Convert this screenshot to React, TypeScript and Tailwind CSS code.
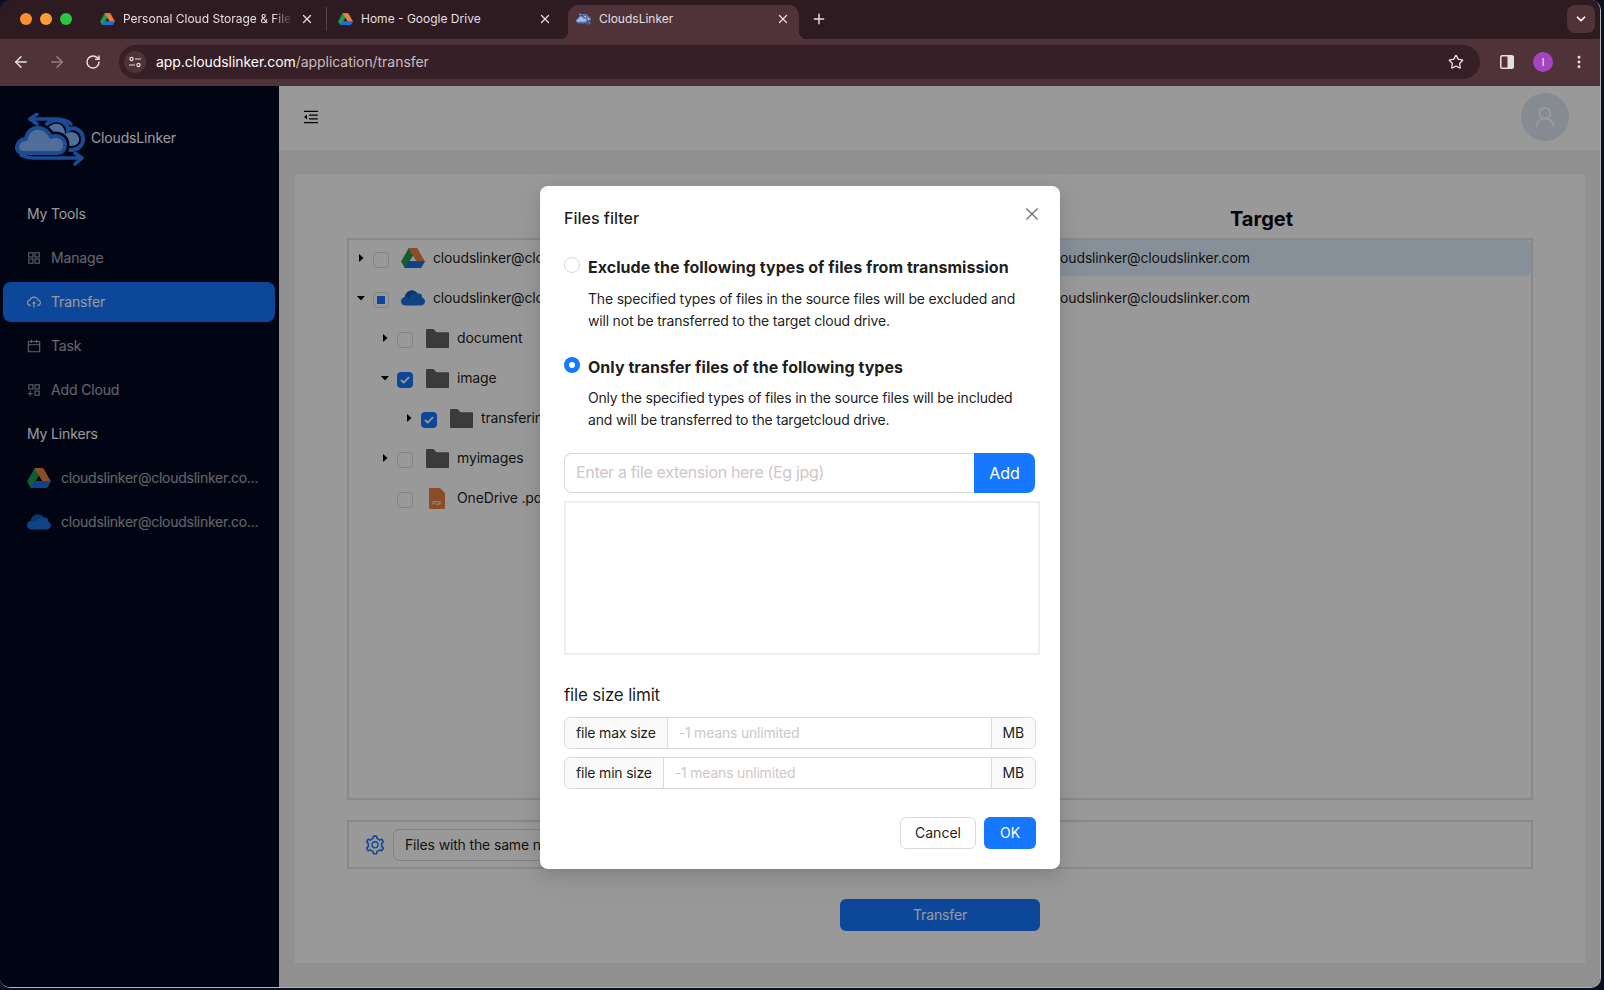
import {
  ArrowLeft,
  ArrowRight,
  ChevronDown,
  EllipsisVertical,
  Plus,
  RotateCw,
  Star,
  X,
} from "lucide-react";
import {
  AiOutlineAppstore,
  AiOutlineAppstoreAdd,
  AiOutlineCalendar,
  AiOutlineClose,
  AiOutlineCloudUpload,
  AiOutlineMenuFold,
  AiOutlineSetting,
  AiOutlineUser,
} from "react-icons/ai";

function Drive({ size = 24 }: { size?: number }) {
  return (
    <svg width={size} height={(size * 20) / 24} viewBox="0 0 24 20" className="shrink-0">
      <g strokeLinejoin="round" strokeWidth="1">
        <path d="M8 .5 L.6 13.5 L4 19.5 L12 6.8 Z" fill="#1f9d4d" stroke="#1f9d4d" />
        <path d="M8 .5 H16 L23.4 13.5 H16 Z" fill="#e8813f" stroke="#e8813f" />
        <path d="M4 19.5 H20 L23.4 13.5 H8 Z" fill="#1c6fe0" stroke="#1c6fe0" />
      </g>
    </svg>
  );
}

function OneDrive({ size = 24 }: { size?: number }) {
  return (
    <svg width={size} height={(size * 16) / 24} viewBox="0 0 24 16" className="shrink-0">
      <path
        d="M5 15.5 C1.5 15.5 0 13.2 0 11.2 C0 9 1.6 7.3 3.8 7 C4.4 3 7.6 .5 11 .5 C13.6 .5 15.6 1.8 16.8 3.8 C17.4 3.6 18 3.5 18.6 3.6 C20.4 3.9 21.4 5.6 21 7.6 C22.8 8.2 24 9.6 24 11.6 C24 13.8 22.2 15.5 20 15.5 Z"
        fill="#1c6fe0"
      />
      <path d="M3.8 7 C4.4 3 7.6 .5 11 .5 C13.6 .5 15.6 1.8 16.8 3.8 C13 3.4 9 5 8 8 C6.6 7 5 6.8 3.8 7 Z" fill="#1558c4" />
    </svg>
  );
}

function Logo({
  width,
  height,
  stroke,
  fill,
  halo,
}: {
  width: number;
  height: number;
  stroke: string;
  fill: string;
  halo: string;
}) {
  return (
    <svg width={width} height={height} viewBox="0 0 70 53" fill="none" className="shrink-0">
      {/* back cloud */}
      <path d="M33 16 C35 11 43 9 47 13 C49 15 50 18 50 21 C55 17 63 19 64 25 C65 30 61 33 56 33 L48 33 L36 22 Z" fill={fill} />
      <path
        d="M29 15 C32 8 42 5 48 9 C51 11 53 14 53 17 C59 13 67 17 68 25 C69 31 64 37 55 37"
        stroke={stroke}
        strokeWidth="4"
        strokeLinecap="round"
      />
      {/* front cloud with a dark gap around it */}
      <path
        d="M8 40 C3 40 1 36 2.5 32 C4 28 7 26 11 26 C12 18 18 14 25 15 C31 16 34 20 36 24 C43 21 50 25 50 32 C50 37 47 40 43 40 Z"
        stroke={halo}
        strokeWidth="9"
        strokeLinejoin="round"
      />
      <path
        d="M8 40 C3 40 1 36 2.5 32 C4 28 7 26 11 26 C12 18 18 14 25 15 C31 16 34 20 36 24 C43 21 50 25 50 32 C50 37 47 40 43 40 Z"
        fill={fill}
        stroke={stroke}
        strokeWidth="4"
        strokeLinejoin="round"
      />
      {/* arrows */}
      <path d="M15 6 H40 C47 6 52 7 56 11" stroke={stroke} strokeWidth="3.5" strokeLinecap="round" />
      <path d="M22 1 L15 6 L22 11" stroke={stroke} strokeWidth="3.5" strokeLinecap="round" strokeLinejoin="round" />
      <path d="M6 42 C10 44 14 45 20 45 H66" stroke={stroke} strokeWidth="3.5" strokeLinecap="round" />
      <path d="M60 40 L67 45 L60 51" stroke={stroke} strokeWidth="3.5" strokeLinecap="round" strokeLinejoin="round" />
    </svg>
  );
}

function Folder() {
  return (
    <svg width="23" height="19" viewBox="0 0 23 19" className="shrink-0">
      <path d="M0 1 C0 .4 .4 0 1 0 H7.5 L10.5 3.2 H22 C22.6 3.2 23 3.6 23 4.2 V18 C23 18.6 22.6 19 22 19 H1 C.4 19 0 18.6 0 18 Z" fill="#636363" />
    </svg>
  );
}

function PdfIcon() {
  return (
    <svg width="16" height="21" viewBox="0 0 16 21" className="shrink-0">
      <path d="M1 0 H11 L16 5 V20 C16 20.6 15.6 21 15 21 H1 C.4 21 0 20.6 0 20 V1 C0 .4 .4 0 1 0 Z" fill="#e8813f" />
      <text x="8" y="17" textAnchor="middle" fontSize="5" fill="#ffffff" fontFamily="Inter, sans-serif">
        PDF
      </text>
    </svg>
  );
}

function Caret({ state }: { state: "open" | "closed" | "none" }) {
  if (state === "none") return <span className="w-2 shrink-0" />;
  return (
    <span className="flex w-2 shrink-0 justify-center">
      <svg width="8" height="8" viewBox="0 0 8 8">
        <path d={state === "open" ? "M0 2 H8 L4 6.5 Z" : "M2 0 L6.5 4 L2 8 Z"} fill="#000000" />
      </svg>
    </span>
  );
}

function Checkbox({ state }: { state: "off" | "on" | "mixed" }) {
  if (state === "on") {
    return (
      <span className="mt-1 ml-2 flex h-4 w-4 shrink-0 items-center justify-center rounded bg-[#1677ff]">
        <svg width="10" height="8" viewBox="0 0 10 8" fill="none">
          <path d="M1 4 L3.8 6.6 L9 1.2" stroke="#ffffff" strokeWidth="1.8" />
        </svg>
      </span>
    );
  }
  return (
    <span className="mt-1 ml-2 flex h-4 w-4 shrink-0 items-center justify-center rounded border border-[#d9d9d9] bg-white">
      {state === "mixed" && <span className="h-2 w-2 bg-[#1677ff]" />}
    </span>
  );
}

const treeRows = [
  { level: 0, caret: "closed", check: "off", icon: <Drive />, label: "cloudslinker@cloudslinker.com" },
  { level: 0, caret: "open", check: "mixed", icon: <OneDrive />, label: "cloudslinker@cloudslinker.com" },
  { level: 1, caret: "closed", check: "off", icon: <Folder />, label: "document" },
  { level: 1, caret: "open", check: "on", icon: <Folder />, label: "image" },
  { level: 2, caret: "closed", check: "on", icon: <Folder />, label: "transfering" },
  { level: 1, caret: "closed", check: "off", icon: <Folder />, label: "myimages" },
  { level: 1, caret: "none", check: "off", icon: <PdfIcon />, label: "OneDrive .pdf" },
] as const;

const levelPadding = ["pl-2", "pl-8", "pl-14"];

function Tab({
  icon,
  title,
  active,
  fade,
}: {
  icon: React.ReactNode;
  title: string;
  active?: boolean;
  fade?: boolean;
}) {
  return (
    <div
      className={`relative flex h-[34px] w-[231px] shrink-0 items-center pr-[9px] pb-[6px] pl-2 ${
        active ? "rounded-t-[10px] bg-[#4f3338]" : ""
      }`}
    >
      {active && (
        <>
          <span className="absolute bottom-0 -left-2 h-2 w-2 bg-[radial-gradient(circle_at_0_0,transparent_8px,#4f3338_8.5px)]" />
          <span className="absolute -right-2 bottom-0 h-2 w-2 bg-[radial-gradient(circle_at_100%_0,transparent_8px,#4f3338_8.5px)]" />
        </>
      )}
      <span className="flex w-[15px] shrink-0 justify-center">{icon}</span>
      <span
        className={`ml-2 w-[170px] overflow-hidden text-xs whitespace-nowrap text-[#e6dfe0] ${
          fade ? "[mask-image:linear-gradient(to_right,black_88%,transparent)]" : ""
        }`}
      >
        {title}
      </span>
      <X size={14} strokeWidth={2.2} className="ml-auto text-[#e6dfe0]" />
    </div>
  );
}

function BrowserChrome() {
  return (
    <div className="shrink-0">
      <div className="flex h-[39px] items-end bg-[#2e1a21]">
        <div className="flex h-[34px] items-center gap-2 pb-[6px] pl-5">
          <span className="h-3 w-3 rounded-full bg-[#fa9033]" />
          <span className="h-3 w-3 rounded-full bg-[#fb9c38]" />
          <span className="h-3 w-3 rounded-full bg-[#28c840]" />
        </div>
        <div className="ml-5 flex items-end">
          <Tab icon={<Drive size={15} />} title="Personal Cloud Storage & File Transfer" fade />
          <span className="mx-[3px] mb-[8px] h-6 w-px bg-[#5a3f45]" />
          <Tab icon={<Drive size={15} />} title="Home - Google Drive" />
          <span className="w-[7px]" />
          <Tab
            icon={<Logo width={15} height={12} stroke="#5f96e6" fill="#9dbcec" halo="#4f3338" />}
            title="CloudsLinker"
            active
          />
        </div>
        <Plus size={16} strokeWidth={2.2} className="mb-[12px] ml-3 text-[#e6dfe0]" />
        <span className="mr-[5px] mb-[6px] ml-auto flex h-7 w-7 items-center justify-center rounded-lg bg-[#4f3338]">
          <ChevronDown size={14} strokeWidth={3} className="text-white" />
        </span>
      </div>
      <div className="flex h-[47px] items-center bg-[#4f3338] pb-px pl-3 text-[#e6dfe0]">
        <ArrowLeft size={18} />
        <ArrowRight size={18} className="ml-[18px] text-[#93807f]" />
        <RotateCw size={16} strokeWidth={2.2} className="ml-[19px]" />
        <div className="ml-[18px] flex h-[34px] w-[1361px] items-center rounded-full bg-[#361f26] pr-4 pl-[5px]">
          <span className="flex h-[22px] w-[22px] items-center justify-center rounded-full bg-[#4f3338]">
            <svg width="12" height="12" viewBox="0 0 12 12" fill="none" stroke="#e6dfe0" strokeWidth="1.2">
              <circle cx="2.5" cy="3" r="1.6" />
              <path d="M6 3 H12" />
              <circle cx="9.5" cy="9" r="1.6" />
              <path d="M0 9 H6" />
            </svg>
          </span>
          <span className="ml-[10px] text-sm tracking-[-0.05px] text-[#c9bdbf]">
            <span className="text-white">app.cloudslinker.com</span>/application/transfer
          </span>
          <Star size={16} strokeWidth={2} className="ml-auto" />
        </div>
        <svg width="14" height="14" viewBox="0 0 14 14" className="ml-5">
          <rect x=".75" y=".75" width="12.5" height="12.5" rx="1.5" fill="none" stroke="#e6dfe0" strokeWidth="1.5" />
          <rect x="7.5" y="1" width="6" height="12" fill="#e6dfe0" />
        </svg>
        <span className="ml-[19px] flex h-5 w-5 items-center justify-center rounded-full bg-[#a644c0] text-[10px] text-white">
          I
        </span>
        <EllipsisVertical size={16} strokeWidth={2.4} className="ml-[18px]" />
      </div>
    </div>
  );
}

const menuItems = [
  { icon: <AiOutlineAppstore size={16} />, label: "Manage" },
  { icon: <AiOutlineCloudUpload size={16} />, label: "Transfer", active: true },
  { icon: <AiOutlineCalendar size={16} />, label: "Task" },
  { icon: <AiOutlineAppstoreAdd size={16} />, label: "Add Cloud" },
];

function Sidebar() {
  return (
    <aside className="flex w-[279px] shrink-0 flex-col bg-[#02081f] text-sm tracking-[-0.15px]">
      <div className="flex h-[108px] items-start pt-[27px] pl-[15px]">
        <Logo width={70} height={53} stroke="#2d7ef5" fill="#85b7ff" halo="#02081f" />
        <span className="mt-[15px] ml-[6px] text-white">CloudsLinker</span>
      </div>
      <div className="mb-1 flex h-10 items-center pl-[27px] text-white">My Tools</div>
      {menuItems.map((item) => (
        <div
          key={item.label}
          className={`mx-[3px] mb-1 flex h-10 w-[272px] items-center gap-[9px] rounded-lg pl-[23px] ${
            item.active ? "bg-[#1677ff] text-white" : "text-white/65"
          }`}
        >
          {item.icon}
          <span>{item.label}</span>
        </div>
      ))}
      <div className="mb-1 flex h-10 items-center pl-[27px] text-white">My Linkers</div>
      <div className="mb-1 flex h-10 items-center gap-[10px] pl-[27px] text-white/65">
        <Drive />
        <span className="tracking-[-0.25px] whitespace-nowrap">cloudslinker@cloudslinker.co...</span>
      </div>
      <div className="flex h-10 items-center gap-[10px] pl-[27px] text-white/65">
        <OneDrive />
        <span className="tracking-[-0.25px] whitespace-nowrap">cloudslinker@cloudslinker.co...</span>
      </div>
    </aside>
  );
}

function TransferPage() {
  return (
    <main className="flex min-w-0 flex-1 flex-col bg-[#f0f0f0]">
      <header className="flex h-16 shrink-0 items-center justify-between bg-white pr-[31px] pb-[2px] pl-[23px]">
        <AiOutlineMenuFold size={18} className="text-black" />
        <span className="flex h-12 w-12 items-center justify-center rounded-full bg-[#dfe8f3]">
          <AiOutlineUser size={26} className="text-white" />
        </span>
      </header>
      <section className="mt-6 mr-[15px] ml-4 flex h-[789px] flex-col bg-white px-[52px] pt-[31px] text-sm tracking-[-0.15px] text-black/90">
        <div className="flex h-7 text-xl font-bold tracking-normal">
          <div className="w-[643px] text-center">Source</div>
          <div className="flex-1 text-center text-[#0a0a1a]">Target</div>
        </div>
        <div className="mt-[5px] flex h-[562px] border-2 border-[#e5e5e5]">
          <div className="w-[641px]">
            {treeRows.map((row, i) => (
              <div key={i} className={`mb-1 flex h-9 items-center whitespace-nowrap ${levelPadding[row.level]}`}>
                <Caret state={row.caret} />
                <Checkbox state={row.check} />
                <span className="flex w-10 shrink-0 justify-center pl-2">{row.icon}</span>
                <span className="ml-1">{row.label}</span>
              </div>
            ))}
          </div>
          <div className="flex-1">
            <div className="mb-1 flex h-9 items-center rounded-md bg-[#e1f1ff] pl-[59px]">
              cloudslinker@cloudslinker.com
            </div>
            <div className="flex h-9 items-center pl-[59px]">cloudslinker@cloudslinker.com</div>
          </div>
        </div>
        <div className="mt-5 flex h-[49px] items-center border-2 border-[#e5e5e5] pl-[15px]">
          <AiOutlineSetting size={22} className="text-[#1677ff]" />
          <div className="ml-[7px] flex h-8 w-[400px] items-center rounded-md border border-[#d9d9d9] px-[11px]">
            Files with the same name
          </div>
        </div>
        <button className="mx-auto mt-[30px] h-8 w-[200px] rounded-md bg-[#1677ff] text-white">Transfer</button>
      </section>
    </main>
  );
}

function SizeRow({ label }: { label: string }) {
  return (
    <div className="flex h-8 w-[472px] overflow-hidden rounded-md border border-[#d9d9d9] text-sm tracking-[-0.2px]">
      <span className="flex items-center border-r border-[#d9d9d9] bg-[#fafafa] px-[11px] whitespace-nowrap text-black/90">
        {label}
      </span>
      <input
        readOnly
        placeholder="-1 means unlimited"
        className="min-w-0 flex-1 px-[11px] outline-none placeholder:text-[#cfc6c8]"
      />
      <span className="flex items-center border-l border-[#d9d9d9] bg-[#fafafa] px-[11px] text-black/90">MB</span>
    </div>
  );
}

function FilterModal() {
  return (
    <div className="absolute inset-0 flex justify-center bg-black/40 pt-[100px]">
      <div className="relative h-[683px] w-[520px] rounded-lg bg-white px-6 pt-5 text-black/90 shadow-[0_6px_16px_0_rgba(0,0,0,0.08),0_3px_6px_-4px_rgba(0,0,0,0.12),0_9px_28px_8px_rgba(0,0,0,0.05)]">
        <AiOutlineClose size={18} className="absolute top-[19px] right-[19px] text-[#777]" />
        <h2 className="h-6 text-base leading-6 font-medium">Files filter</h2>

        <div className="relative mt-[25px] pl-6">
          <span className="absolute top-[2px] left-0 h-4 w-4 rounded-full border border-[#d9d9d9] bg-white" />
          <div className="h-6 text-base leading-6 font-bold tracking-[0.04px]">
            Exclude the following types of files from transmission
          </div>
          <p className="mt-[9px] text-sm leading-[22px] tracking-[-0.19px]">
            The specified types of files in the source files will be excluded and
            <br />
            will not be transferred to the target cloud drive.
          </p>
        </div>

        <div className="relative mt-[23px] pl-6">
          <span className="absolute top-[2px] left-0 flex h-4 w-4 items-center justify-center rounded-full bg-[#1677ff]">
            <span className="h-[6px] w-[6px] rounded-full bg-white" />
          </span>
          <div className="h-6 text-base leading-6 font-bold tracking-[0.04px]">Only transfer files of the following types</div>
          <p className="mt-2 text-sm leading-[22px] tracking-[-0.19px]">
            Only the specified types of files in the source files will be included
            <br />
            and will be transferred to the targetcloud drive.
          </p>
        </div>

        <div className="mt-[22px] flex h-10 w-[471px]">
          <input
            readOnly
            placeholder="Enter a file extension here (Eg jpg)"
            className="min-w-0 flex-1 rounded-l-lg border border-r-0 border-[#d9d9d9] px-[11px] pb-[2px] text-base tracking-[-0.34px] outline-none placeholder:text-[#cfc6c8]"
          />
          <button className="w-[61px] rounded-r-lg bg-[#1677ff] text-base text-white">Add</button>
        </div>

        <div className="mt-2 h-[154px] w-[476px] border-2 border-[#eeeeee]" />

        <div className="mt-7 h-6 text-[17px] leading-6 tracking-[-0.2px]">file size limit</div>
        <div className="mt-[10px] flex flex-col gap-2">
          <SizeRow label="file max size" />
          <SizeRow label="file min size" />
        </div>

        <div className="mt-7 flex justify-end gap-2 text-sm">
          <button className="h-8 w-[76px] rounded-md border border-[#d9d9d9] bg-white">Cancel</button>
          <button className="h-8 w-[52px] rounded-md bg-[#1677ff] text-white">OK</button>
        </div>
      </div>
    </div>
  );
}

export default function App() {
  return (
    <div className="h-[990px] w-[1604px] overflow-hidden bg-[#0b1020] font-['Inter',sans-serif]">
      <div className="flex h-[988px] w-[1601px] flex-col overflow-hidden rounded-[10px] border-r border-b border-[#b5b5b5]">
        <BrowserChrome />
        <div className="relative flex min-h-0 flex-1">
          <Sidebar />
          <TransferPage />
          <FilterModal />
        </div>
      </div>
    </div>
  );
}
